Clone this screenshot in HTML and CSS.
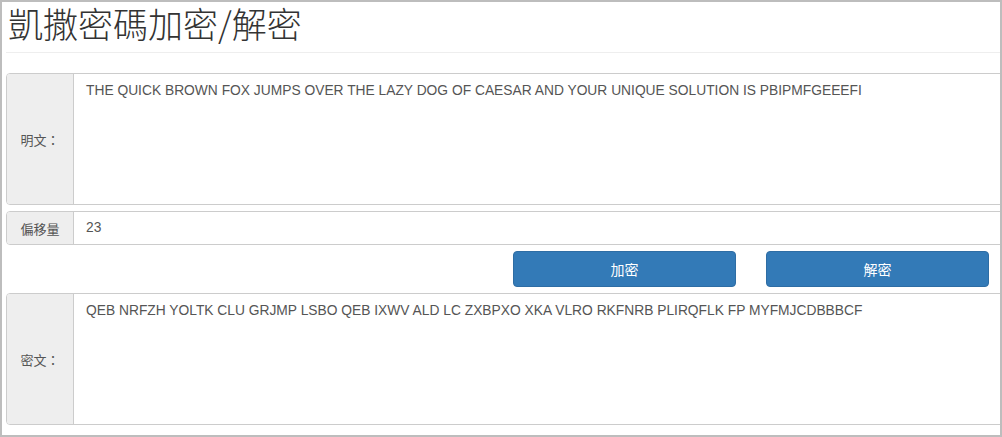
FILE: index.html
```html
<!DOCTYPE html>
<html lang="zh-Hant">
<head>
<meta charset="utf-8">
<title>凱撒密碼加密/解密</title>
<link rel="stylesheet" href="styles.css">
</head>
<body>
<div class="frame">
  <div class="content">
    <div class="header">
      <h1 class="title">凱撒密碼加密/解密</h1>
    </div>
    <div class="group group-tall">
      <div class="addon">明文：</div>
      <div class="field field-area">THE QUICK BROWN FOX JUMPS OVER THE LAZY DOG OF CAESAR AND YOUR UNIQUE SOLUTION IS PBIPMFGEEEFI</div>
    </div>
    <div class="group group-short">
      <div class="addon">偏移量</div>
      <div class="field field-line">23</div>
    </div>
    <div class="actions">
      <button class="btn">加密</button>
      <button class="btn">解密</button>
    </div>
    <div class="group group-tall">
      <div class="addon">密文：</div>
      <div class="field field-area">QEB NRFZH YOLTK CLU GRJMP LSBO QEB IXWV ALD LC ZXBPXO XKA VLRO RKFNRB PLIRQFLK FP MYFMJCDBBBCF</div>
    </div>
  </div>
</div>
</body>
</html>
```

FILE: styles.css
```css
* { box-sizing: border-box; }
html, body { margin: 0; padding: 0; background: #fff; }
body {
  font-family: "Liberation Sans", Arial, "Noto Sans CJK TC", sans-serif;
  color: #555;
  font-size: 14px;
}
.frame {
  width: 1002px;
  height: 437px;
  border: 2px solid #bdbdbd;
  overflow: hidden;
}
.content {
  width: 1012px;
  padding: 0 0 0 4px;
}
.header {
  border-bottom: 1px solid #eee;
  padding-bottom: 8px;
  margin-bottom: 20px;
}
.title {
  margin: 0;
  padding-left: 2px;
  font-family: "Noto Sans CJK TC", "Liberation Sans", sans-serif;
  font-weight: 300;
  font-size: 35px;
  line-height: 42px;
  color: #333;
}
.group {
  display: flex;
  border: 1px solid #ccc;
  border-radius: 4px 0 0 4px;
  margin-bottom: 6px;
}
.group-tall { height: 132px; }
.group-short { height: 34px; }
.addon {
  width: 67px;
  flex: none;
  background: #eee;
  border-right: 1px solid #ccc;
  display: flex;
  align-items: center;
  justify-content: center;
  font-family: "Liberation Sans", "Noto Sans CJK TC", sans-serif;
  font-size: 13px;
  color: #555;
  border-radius: 3px 0 0 3px;
}
.field {
  flex: 1;
  padding: 0 12px;
  font-size: 13.8px;
  color: #555;
  line-height: 18px;
}
.field-area { padding-top: 8px; }
.field-line { display: flex; align-items: center; }
.actions {
  display: flex;
  justify-content: flex-end;
  gap: 30px;
  padding-right: 25px;
  margin-bottom: 6px;
}
.btn {
  width: 223px;
  height: 36px;
  background: #337ab7;
  border: 1px solid #2e6da4;
  border-radius: 4px;
  color: #fff;
  font-family: "Liberation Sans", "Noto Sans CJK TC", sans-serif;
  font-size: 14px;
  padding: 0;
}
```
